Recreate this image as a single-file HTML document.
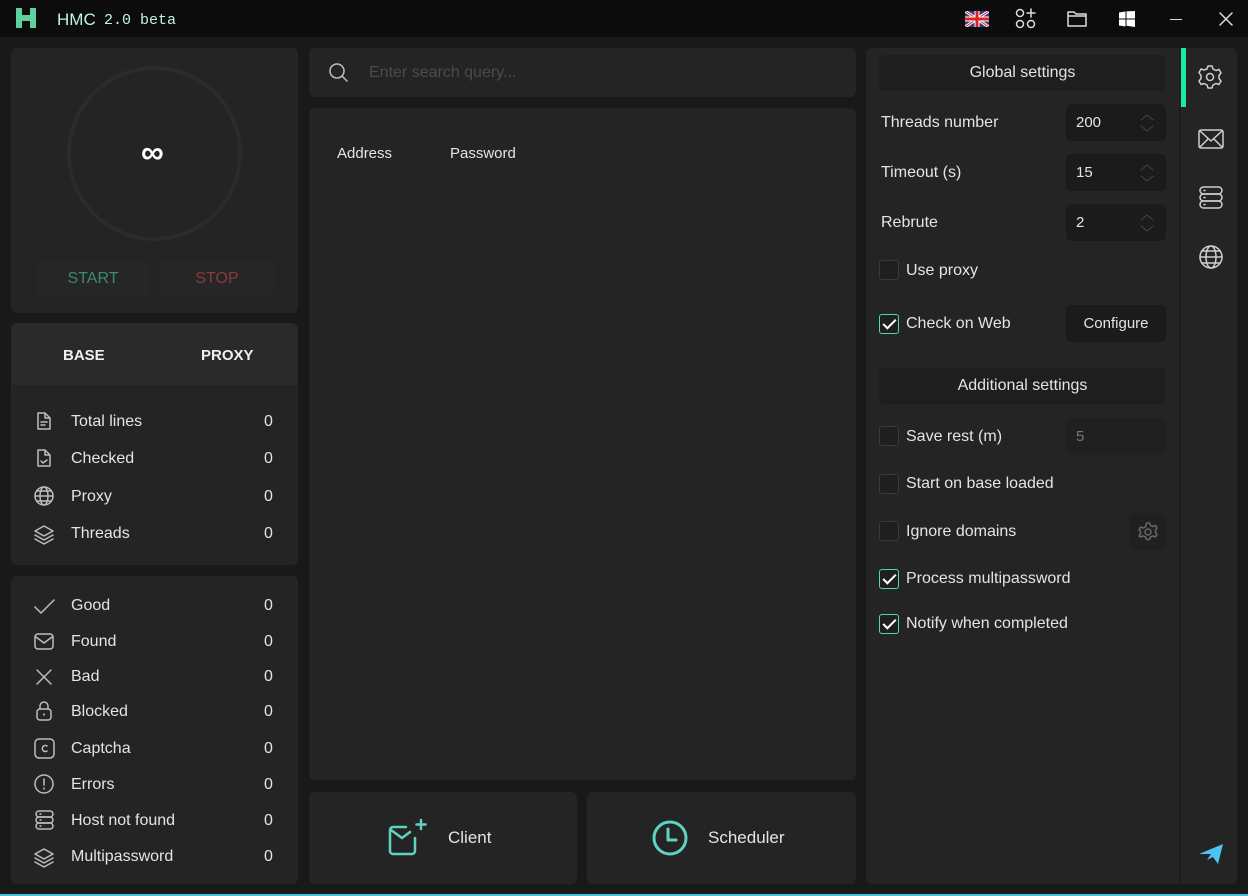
<!DOCTYPE html>
<html><head><meta charset="utf-8"><style>
*{box-sizing:border-box;margin:0;padding:0}
body{width:1248px;height:896px;background:#191919;font-family:"Liberation Sans",sans-serif;color:#e4e4e4;position:relative;overflow:hidden;font-size:16px}
.a{position:absolute}
.p{position:absolute;background:#242424;border-radius:6px}
.t{position:absolute;white-space:nowrap}
svg{position:absolute;fill:none;stroke:#bdbdbd;stroke-width:1.5;stroke-linecap:round;stroke-linejoin:round}
.cb{position:absolute;width:20px;height:20px;border:1px solid #3a3a3a;border-radius:3px;background:#1f1f1f}
.cb.on{border:1.5px solid #4fd8b8}
.cb.on:after{content:"";position:absolute;left:6px;top:1px;width:5px;height:11px;border:solid #fff;border-width:0 2.5px 2.5px 0;transform:rotate(45deg)}
.sp{position:absolute;left:1066px;width:100px;height:37px;background:#1b1b1b;border-radius:5px}
.sp span{position:absolute;left:10px;top:10px;font-size:15px}
.hd{position:absolute;left:879px;width:287px;height:36px;background:#1e1e1e;border-radius:5px;text-align:center;line-height:36px}
</style></head><body>
<div class="a" style="left:0;top:0;width:1248px;height:37px;background:#0c0c0c"></div>
<div class="t" style="left:16px;top:8px;width:20px;height:20px;"><svg width="20" height="20" style="stroke:none"><path d="M0 0h6v7h8V0h6v20h-6v-7H6v7H0z" fill="#5fcf9e"/></svg></div>
<div class="t" style="left:57px;top:10px;font-size:17px;color:#bff5e4">HMC</div>
<div class="t" style="left:104px;top:12px;font-family:'Liberation Mono',monospace;font-size:15px;color:#bff5e4">2.0 beta</div>
<svg width="24" height="16" style="left:965px;top:11px;stroke:none"><rect width="24" height="16" fill="#2a3f8f"/><path d="M0 0L24 16M24 0L0 16" stroke="#fff" stroke-width="3"/><path d="M0 0L24 16M24 0L0 16" stroke="#d22" stroke-width="1"/><path d="M12 0v16M0 8h24" stroke="#fff" stroke-width="5"/><path d="M12 0v16M0 8h24" stroke="#d22" stroke-width="3"/></svg>
<svg width="22" height="22" style="left:1015px;top:8px;stroke:#ddd"><circle cx="5" cy="5" r="3.5"/><circle cx="5" cy="16" r="3.5"/><circle cx="16" cy="16" r="3.5"/><path d="M16 1v8M12 5h8"/></svg>
<svg width="22" height="22" style="left:1066px;top:8px;stroke:#ddd"><path d="M2 4h6l2 2h10v12H2z M2 8h18"/></svg>
<svg width="16" height="16" style="left:1119px;top:11px;stroke:none"><path d="M0 1.5l6.5-1v7H0zM7.5 0.4L16 0v7.5H7.5zM0 8.5h6.5v7L0 14.5zM7.5 8.5H16V16l-8.5-1.2z" fill="#fff"/></svg>
<div class="a" style="left:1170px;top:19px;width:12px;height:1px;background:#ddd"></div>
<svg width="14" height="14" style="left:1219px;top:12px;stroke:#ddd"><path d="M1 1l12 12M13 1L1 13"/></svg>

<div class="p" style="left:11px;top:48px;width:287px;height:265px"></div>
<div class="a" style="left:67px;top:66px;width:175px;height:175px;border-radius:50%;border:4px solid #2b2b2b"></div>
<div class="t" style="left:141px;top:134px;font-size:32px;font-weight:bold;color:#fff">∞</div>
<div class="a" style="left:36px;top:260px;width:114px;height:37px;background:#262626;border-radius:5px;text-align:center;line-height:37px;color:#3c8a6c;font-size:16px">START</div>
<div class="a" style="left:160px;top:260px;width:114px;height:37px;background:#262626;border-radius:5px;text-align:center;line-height:37px;color:#8a3a3a;font-size:16px">STOP</div>

<div class="p" style="left:11px;top:323px;width:287px;height:242px"></div>
<div class="a" style="left:11px;top:323px;width:287px;height:62px;background:#2a2a2a;border-radius:6px 6px 0 0"></div>
<div class="t" style="left:63px;top:347px;font-weight:bold;font-size:15px;color:#f0f0f0">BASE</div>
<div class="t" style="left:201px;top:347px;font-weight:bold;font-size:15px;color:#f0f0f0">PROXY</div>
<svg width="20" height="20" style="left:34px;top:411px"><path d="M4 2h7l5 5v11H4zM11 2v5h5M7 11h6M7 14h4"/></svg>
<div class="t" style="left:71px;top:413px">Total lines</div><div class="t" style="left:264px;top:413px">0</div>
<svg width="20" height="20" style="left:34px;top:448px"><path d="M4 2h7l5 5v11H4zM11 2v5h5M7 13l2 2 4-3"/></svg>
<div class="t" style="left:71px;top:450px">Checked</div><div class="t" style="left:264px;top:450px">0</div>
<svg width="22" height="22" style="left:33px;top:485px"><circle cx="11" cy="11" r="9"/><ellipse cx="11" cy="11" rx="4" ry="9"/><path d="M2 11h18M4 6h14M4 16h14"/></svg>
<div class="t" style="left:71px;top:488px">Proxy</div><div class="t" style="left:264px;top:488px">0</div>
<svg width="22" height="22" style="left:33px;top:523px"><path d="M11 3l9 5-9 5-9-5zM2 12l9 5 9-5M2 16l9 5 9-5"/></svg>
<div class="t" style="left:71px;top:525px">Threads</div><div class="t" style="left:264px;top:525px">0</div>

<div class="p" style="left:11px;top:576px;width:287px;height:308px"></div>
<svg width="22" height="22" style="left:33px;top:595px"><path d="M2 12l6 6L21 5"/></svg>
<div class="t" style="left:71px;top:597px">Good</div><div class="t" style="left:264px;top:597px">0</div>
<svg width="22" height="22" style="left:33px;top:631px"><rect x="2" y="3" width="18" height="15" rx="3"/><path d="M3 6l8 6 8-6"/></svg>
<div class="t" style="left:71px;top:633px">Found</div><div class="t" style="left:264px;top:633px">0</div>
<svg width="22" height="22" style="left:33px;top:666px"><path d="M4 4l14 14M18 4L4 18"/></svg>
<div class="t" style="left:71px;top:668px">Bad</div><div class="t" style="left:264px;top:668px">0</div>
<svg width="22" height="22" style="left:33px;top:700px"><rect x="4" y="9" width="14" height="11" rx="3"/><path d="M7 9V6a4 4 0 0 1 8 0v3M11 14v1"/></svg>
<div class="t" style="left:71px;top:703px">Blocked</div><div class="t" style="left:264px;top:703px">0</div>
<svg width="22" height="24" style="left:33px;top:737px"><rect x="2" y="2" width="19" height="19" rx="4"/><path d="M14 9a3 3 0 1 0 0 5"/></svg>
<div class="t" style="left:71px;top:740px">Captcha</div><div class="t" style="left:264px;top:740px">0</div>
<svg width="22" height="22" style="left:33px;top:773px"><circle cx="11" cy="11" r="9"/><path d="M11 6v6M11 15v1"/></svg>
<div class="t" style="left:71px;top:776px">Errors</div><div class="t" style="left:264px;top:776px">0</div>
<svg width="22" height="22" style="left:33px;top:809px"><rect x="3" y="2" width="17" height="6" rx="3"/><rect x="3" y="8" width="17" height="6" rx="3"/><rect x="3" y="14" width="17" height="6" rx="3"/><path d="M7 5h1M7 11h1M7 17h1"/></svg>
<div class="t" style="left:71px;top:812px">Host not found</div><div class="t" style="left:264px;top:812px">0</div>
<svg width="22" height="22" style="left:33px;top:846px"><path d="M11 3l9 5-9 5-9-5zM2 12l9 5 9-5M2 16l9 5 9-5"/></svg>
<div class="t" style="left:71px;top:848px">Multipassword</div><div class="t" style="left:264px;top:848px">0</div>

<div class="p" style="left:309px;top:48px;width:547px;height:49px"></div>
<svg width="22" height="22" style="left:327px;top:61px"><circle cx="10" cy="10" r="7"/><path d="M15 15l5 5"/></svg>
<div class="t" style="left:369px;top:64px;color:#4b4b4b">Enter search query...</div>
<div class="p" style="left:309px;top:108px;width:547px;height:672px"></div>
<div class="t" style="left:337px;top:145px;font-size:15px">Address</div>
<div class="t" style="left:450px;top:145px;font-size:15px">Password</div>
<div class="p" style="left:309px;top:792px;width:268px;height:92px"></div>
<svg width="40" height="40" style="left:387px;top:818px;stroke:#5fd3c2;stroke-width:2.5"><path d="M28 20v13a3 3 0 0 1-3 3H6a3 3 0 0 1-3-3V12a3 3 0 0 1 3-3h13"/><path d="M4 12l11 8 8-6M34 2v9M29.5 6.5h9"/></svg>
<div class="t" style="left:448px;top:828px;font-size:17px">Client</div>
<div class="p" style="left:587px;top:792px;width:269px;height:92px"></div>
<svg width="40" height="40" style="left:650px;top:818px;stroke:#5fd3c2;stroke-width:3"><circle cx="20" cy="20" r="16"/><path d="M18 11v11h8"/></svg>
<div class="t" style="left:708px;top:828px;font-size:17px">Scheduler</div>

<div class="p" style="left:866px;top:48px;width:371px;height:836px"></div>
<div class="a" style="left:1179px;top:48px;width:2px;height:836px;background:#1e1e1e"></div>
<div class="a" style="left:1181px;top:48px;width:5px;height:59px;background:#1de9a6"></div>
<svg width="26" height="26" style="left:1197px;top:64px;stroke:#cfcfcf"><path d="M11 2h4l1 3 3 1.5 3-1 2 3.5-2 2.5v3l2 2.5-2 3.5-3-1-3 1.5-1 3h-4l-1-3-3-1.5-3 1-2-3.5 2-2.5v-3L2 8.5l2-3.5 3 1L10 5z"/><circle cx="13" cy="13" r="3.5"/></svg>
<svg width="26" height="26" style="left:1198px;top:126px;stroke:#cfcfcf"><rect x="1" y="4" width="24" height="18" rx="2"/><path d="M2 5l11 10 11-10M2 21l8-8M24 21l-8-8"/></svg>
<svg width="26" height="26" style="left:1198px;top:185px;stroke:#cfcfcf"><rect x="2" y="2" width="22" height="7" rx="3.5"/><rect x="2" y="9" width="22" height="7" rx="3.5"/><rect x="2" y="16" width="22" height="7" rx="3.5"/><path d="M6 5.5h1M6 12.5h1M6 19.5h1"/></svg>
<svg width="26" height="26" style="left:1198px;top:244px;stroke:#cfcfcf"><circle cx="13" cy="13" r="11"/><ellipse cx="13" cy="13" rx="5" ry="11"/><path d="M2 13h22M4 7h18M4 19h18"/></svg>
<svg width="26" height="22" style="left:1198px;top:843px;stroke:none"><path d="M1 11L25 1l-5 20-5-7-6 3 4-6z" fill="#4cc3f2"/></svg>

<div class="hd" style="top:55px">Global settings</div>
<div class="t" style="left:881px;top:114px">Threads number</div>
<div class="sp" style="top:104px"><span>200</span></div>
<div class="t" style="left:881px;top:164px">Timeout (s)</div>
<div class="sp" style="top:154px"><span>15</span></div>
<div class="t" style="left:881px;top:214px">Rebrute</div>
<div class="sp" style="top:204px"><span>2</span></div>
<svg width="16" height="20" style="left:1139px;top:113px;stroke:#444;stroke-width:1"><path d="M2 7l6-5 6 5M2 13l6 5 6-5"/></svg>
<svg width="16" height="20" style="left:1139px;top:163px;stroke:#444;stroke-width:1"><path d="M2 7l6-5 6 5M2 13l6 5 6-5"/></svg>
<svg width="16" height="20" style="left:1139px;top:213px;stroke:#444;stroke-width:1"><path d="M2 7l6-5 6 5M2 13l6 5 6-5"/></svg>
<div class="cb" style="left:879px;top:260px"></div><div class="t" style="left:906px;top:262px">Use proxy</div>
<div class="cb on" style="left:879px;top:314px"></div><div class="t" style="left:906px;top:315px">Check on Web</div>
<div class="a" style="left:1066px;top:305px;width:100px;height:37px;background:#1b1b1b;border-radius:5px;text-align:center;line-height:38px;font-size:15px">Configure</div>
<div class="hd" style="top:368px">Additional settings</div>
<div class="cb" style="left:879px;top:426px"></div><div class="t" style="left:906px;top:428px">Save rest (m)</div>
<div class="sp" style="top:418px;background:#202020"><span style="color:#777">5</span></div>
<div class="cb" style="left:879px;top:474px"></div><div class="t" style="left:906px;top:475px">Start on base loaded</div>
<div class="cb" style="left:879px;top:521px"></div><div class="t" style="left:906px;top:523px">Ignore domains</div>
<div class="a" style="left:1129px;top:513px;width:37px;height:37px;background:#202020;border-radius:5px"></div>
<svg width="22" height="22" style="left:1137px;top:521px;stroke:#666"><path d="M9.5 2h3l1 2.5 2.5 1 2.5-1 1.5 2.5-1.5 2v2.5l1.5 2-1.5 2.5-2.5-1-2.5 1-1 2.5h-3l-1-2.5-2.5-1-2.5 1L2 15l1.5-2v-2.5L2 8.5 3.5 6l2.5 1 2.5-1z"/><circle cx="11" cy="11" r="3"/></svg>
<div class="cb on" style="left:879px;top:569px"></div><div class="t" style="left:906px;top:570px">Process multipassword</div>
<div class="cb on" style="left:879px;top:614px"></div><div class="t" style="left:906px;top:615px">Notify when completed</div>
<div class="a" style="left:0;top:894px;width:1248px;height:2px;background:#4cb8e0"></div>
</body></html>
